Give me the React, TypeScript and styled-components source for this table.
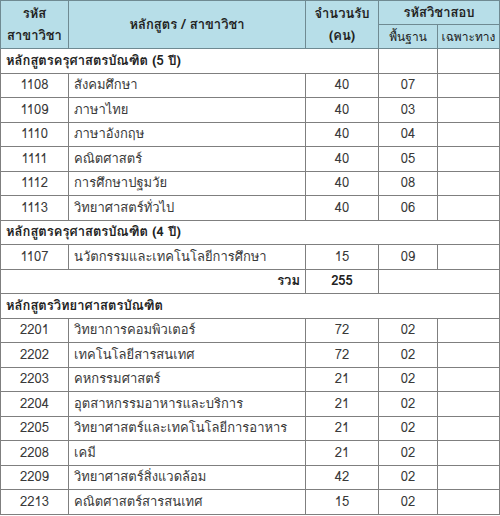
import React from "react";
import styled, { createGlobalStyle } from "styled-components";

const Global = createGlobalStyle`
  html, body { margin: 0; padding: 0; background: #fff; }
  body { font-family: Tahoma, Loma, "Noto Sans Thai Looped", Garuda, "Noto Sans Thai", "DejaVu Sans", sans-serif; }
`;

const Table = styled.table`
  border-collapse: collapse;
  table-layout: fixed;
  width: 499px;
  font-size: 13px;
  color: #3a3a3a;
`;

const HeadCell = styled.th<{ $light?: boolean }>`
  background: #b7dee8;
  border: 1px solid #6f8a92;
  font-weight: ${(p) => (p.$light ? 400 : 700)};
  color: #222;
  text-align: center;
  vertical-align: middle;
  padding: 0;
  line-height: 22px;
  font-size: ${(p) => (p.$light ? "12px" : "13px")};
`;

const Row = styled.tr`
  height: 24.5px;
`;

const HeadRow = styled.tr`
  height: 24px;
`;

const Cell = styled.td<{ $align?: "left" | "center" | "right"; $bold?: boolean }>`
  border: 1px solid #7f7f7f;
  text-align: ${(p) => p.$align || "left"};
  font-weight: ${(p) => (p.$bold ? 700 : 400)};
  color: ${(p) => (p.$bold ? "#222" : "#3a3a3a")};
  padding: 0 5px;
  vertical-align: middle;
  white-space: nowrap;
  overflow: hidden;
  line-height: 20px;
`;

const SectionCell = styled.td`
  border: 1px solid #7f7f7f;
  font-weight: 700;
  color: #222;
  padding: 0 5px;
  white-space: nowrap;
  line-height: 20px;
`;

type Item = { code: string; name: string; seats: number; base: string };

const group1: Item[] = [
  { code: "1108", name: "สังคมศึกษา", seats: 40, base: "07" },
  { code: "1109", name: "ภาษาไทย", seats: 40, base: "03" },
  { code: "1110", name: "ภาษาอังกฤษ", seats: 40, base: "04" },
  { code: "1111", name: "คณิตศาสตร์", seats: 40, base: "05" },
  { code: "1112", name: "การศึกษาปฐมวัย", seats: 40, base: "08" },
  { code: "1113", name: "วิทยาศาสตร์ทั่วไป", seats: 40, base: "06" },
];

const group2: Item[] = [
  { code: "1107", name: "นวัตกรรมและเทคโนโลยีการศึกษา", seats: 15, base: "09" },
];

const group3: Item[] = [
  { code: "2201", name: "วิทยาการคอมพิวเตอร์", seats: 72, base: "02" },
  { code: "2202", name: "เทคโนโลยีสารสนเทศ", seats: 72, base: "02" },
  { code: "2203", name: "คหกรรมศาสตร์", seats: 21, base: "02" },
  { code: "2204", name: "อุตสาหกรรมอาหารและบริการ", seats: 21, base: "02" },
  { code: "2205", name: "วิทยาศาสตร์และเทคโนโลยีการอาหาร", seats: 21, base: "02" },
  { code: "2208", name: "เคมี", seats: 21, base: "02" },
  { code: "2209", name: "วิทยาศาสตร์สิ่งแวดล้อม", seats: 42, base: "02" },
  { code: "2213", name: "คณิตศาสตร์สารสนเทศ", seats: 15, base: "02" },
];

const ItemRow = ({ it }: { it: Item }) => (
  <Row>
    <Cell $align="center">{it.code}</Cell>
    <Cell>{it.name}</Cell>
    <Cell $align="center">{it.seats}</Cell>
    <Cell $align="center">{it.base}</Cell>
    <Cell />
  </Row>
);

export default function App() {
  return (
    <>
      <Global />
      <Table>
        <colgroup>
          <col style={{ width: 68 }} />
          <col style={{ width: 237 }} />
          <col style={{ width: 73 }} />
          <col style={{ width: 59 }} />
          <col style={{ width: 62 }} />
        </colgroup>
        <thead>
          <HeadRow>
            <HeadCell rowSpan={2}>
              รหัส
              <br />
              สาขาวิชา
            </HeadCell>
            <HeadCell rowSpan={2}>หลักสูตร / สาขาวิชา</HeadCell>
            <HeadCell rowSpan={2}>
              จำนวนรับ
              <br />
              (คน)
            </HeadCell>
            <HeadCell colSpan={2}>รหัสวิชาสอบ</HeadCell>
          </HeadRow>
          <HeadRow>
            <HeadCell $light>พื้นฐาน</HeadCell>
            <HeadCell $light>เฉพาะทาง</HeadCell>
          </HeadRow>
        </thead>
        <tbody>
          <Row>
            <SectionCell colSpan={3}>หลักสูตรครุศาสตรบัณฑิต (5 ปี)</SectionCell>
            <Cell />
            <Cell />
          </Row>
          {group1.map((it) => (
            <ItemRow key={it.code} it={it} />
          ))}
          <Row>
            <SectionCell colSpan={5}>หลักสูตรครุศาสตรบัณฑิต (4 ปี)</SectionCell>
          </Row>
          {group2.map((it) => (
            <ItemRow key={it.code} it={it} />
          ))}
          <Row>
            <Cell colSpan={2} $align="right" $bold>
              รวม
            </Cell>
            <Cell $align="center" $bold>
              255
            </Cell>
            <Cell colSpan={2} />
          </Row>
          <Row>
            <SectionCell colSpan={5}>หลักสูตรวิทยาศาสตรบัณฑิต</SectionCell>
          </Row>
          {group3.map((it) => (
            <ItemRow key={it.code} it={it} />
          ))}
        </tbody>
      </Table>
    </>
  );
}
